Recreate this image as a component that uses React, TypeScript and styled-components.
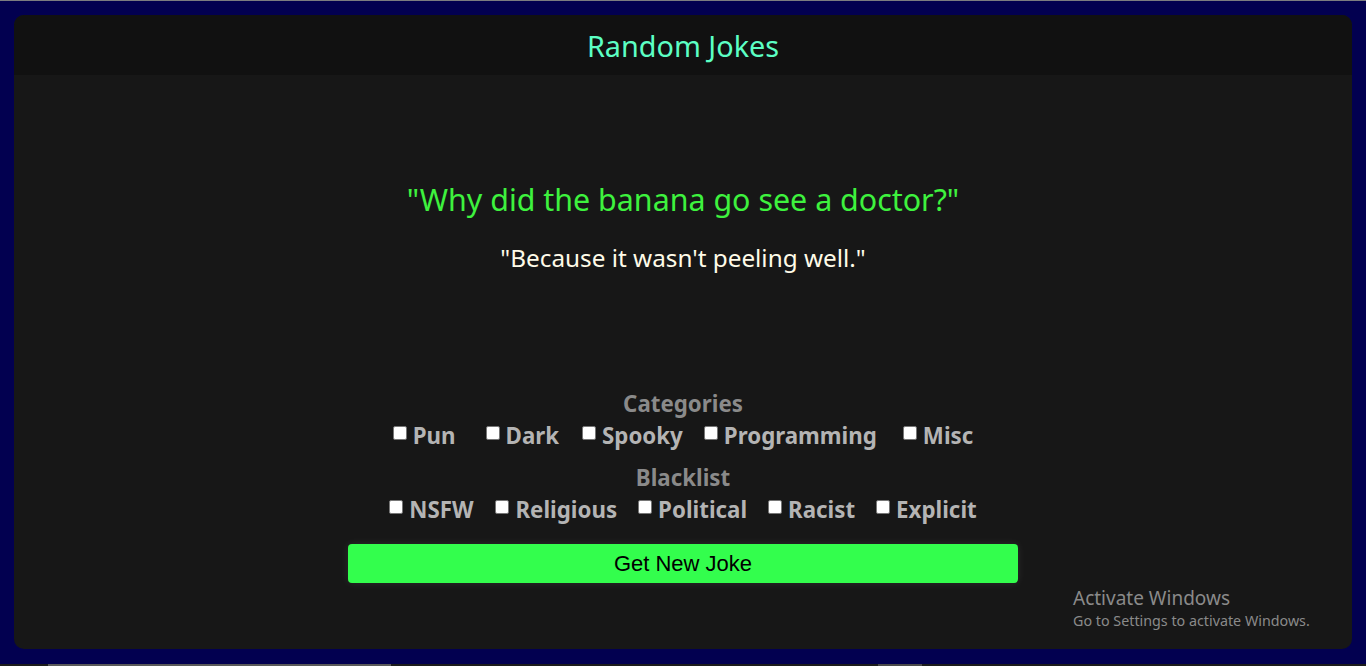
import React from "react";
import styled, { createGlobalStyle } from "styled-components";

const Global = createGlobalStyle`
  html, body { margin: 0; padding: 0; background: #020050; }
  body { font-family: "Noto Sans", "Open Sans", sans-serif; overflow: hidden; }
  * { box-sizing: border-box; }
`;

const Page = styled.div`
  width: 1366px;
  height: 666px;
  background: #020050;
  border-top: 1px solid #7c7c80;
  padding: 14px 14px 0 14px;
  display: flex;
  flex-direction: column;
  position: relative;
`;

const Card = styled.main`
  height: 634px;
  border-radius: 10px;
  background: #171717;
  overflow: hidden;
  display: flex;
  flex-direction: column;
`;

const Header = styled.header`
  height: 60px;
  background: #111111;
  display: flex;
  align-items: center;
  justify-content: center;
`;

const Title = styled.h1`
  margin: 0;
  font-size: 28.8px;
  font-weight: 400;
  color: #5cffc4;
  line-height: 1;
  padding-top: 3px;
`;

const Body = styled.section`
  flex: 1;
  display: flex;
  flex-direction: column;
  align-items: center;
`;

const Setup = styled.p`
  margin: 105px 0 0 0;
  font-size: 30.4px;
  line-height: 40px;
  color: #3ef23e;
`;

const Delivery = styled.p`
  margin: 22px 0 0 0;
  font-size: 24.3px;
  line-height: 32px;
  color: #fffbe8;
`;

const GroupTitle = styled.h3<{ $top: number }>`
  margin: ${(p) => p.$top}px 0 0 0;
  font-size: 22.3px;
  line-height: 29px;
  font-weight: 700;
  color: #8a8a8a;
`;

const Options = styled.div`
  margin-top: 3px;
  display: flex;
  align-items: center;
  justify-content: center;
  height: 29px;
`;

const Option = styled.label<{ $gap: number }>`
  display: flex;
  align-items: center;
  margin-right: ${(p) => p.$gap}px;
  font-size: 22.3px;
  line-height: 29px;
  font-weight: 700;
  color: #b4b4b4;
  &:last-child { margin-right: 0; }
`;

const Box = styled.input`
  appearance: none;
  width: 14px;
  height: 14px;
  margin: 0 6px 0 0;
  background: #ffffff;
  border: 1px solid #767676;
  border-radius: 2px;
  transform: translateY(-3px);
`;

const Button = styled.button`
  margin-top: 20px;
  width: 670px;
  height: 39px;
  border: none;
  border-radius: 4px;
  background: #33fe4d;
  color: #000;
  font-family: "Liberation Sans", Arial, sans-serif;
  font-size: 22px;
  box-shadow: 0 0 8px rgba(255, 255, 255, 0.09);
  cursor: pointer;
`;

const Watermark = styled.div`
  position: absolute;
  left: 1073px;
  top: 585px;
  color: #8a8a8a;
  font-family: "Noto Sans", sans-serif;
  display: flex;
  flex-direction: column;
`;

const WmTitle = styled.span`
  font-size: 19px;
  line-height: 25px;
`;

const WmSub = styled.span`
  font-size: 14.3px;
  line-height: 20px;
`;

const Strip = styled.div`
  position: absolute;
  left: 0;
  right: 0;
  bottom: 0;
  height: 2px;
  background: #1c1c1c;
`;

const Thumb = styled.div<{ $left: number; $width: number; $color: string }>`
  position: absolute;
  top: 0;
  left: ${(p) => p.$left}px;
  width: ${(p) => p.$width}px;
  height: 2px;
  background: ${(p) => p.$color};
`;

const categories: [string, number][] = [
  ["Pun", 30],
  ["Dark", 23],
  ["Spooky", 21],
  ["Programming", 26],
  ["Misc", 0],
];

const blacklist: [string, number][] = [
  ["NSFW", 22],
  ["Religious", 21],
  ["Political", 21],
  ["Racist", 21],
  ["Explicit", 0],
];

export default function App() {
  return (
    <>
      <Global />
      <Page>
        <Card>
          <Header>
            <Title>Random Jokes</Title>
          </Header>
          <Body>
            <Setup>"Why did the banana go see a doctor?"</Setup>
            <Delivery>"Because it wasn't peeling well."</Delivery>
            <GroupTitle $top={115}>Categories</GroupTitle>
            <Options>
              {categories.map(([name, gap]) => (
                <Option key={name} $gap={gap}>
                  <Box type="checkbox" />
                  {name}
                </Option>
              ))}
            </Options>
            <GroupTitle $top={13}>Blacklist</GroupTitle>
            <Options>
              {blacklist.map(([name, gap]) => (
                <Option key={name} $gap={gap}>
                  <Box type="checkbox" />
                  {name}
                </Option>
              ))}
            </Options>
            <Button>Get New Joke</Button>
          </Body>
        </Card>
        <Watermark>
          <WmTitle>Activate Windows</WmTitle>
          <WmSub>Go to Settings to activate Windows.</WmSub>
        </Watermark>
        <Strip>
          <Thumb $left={48} $width={343} $color="#5a5a5a" />
          <Thumb $left={878} $width={44} $color="#4a4a4a" />
        </Strip>
      </Page>
    </>
  );
}
